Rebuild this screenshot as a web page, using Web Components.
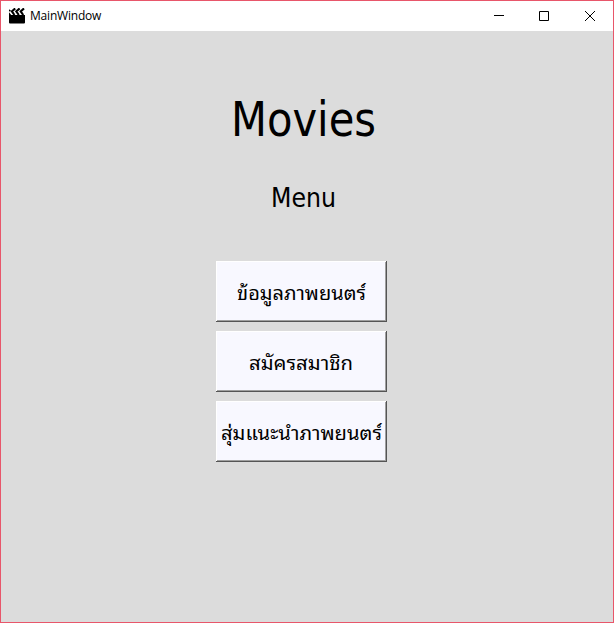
<!DOCTYPE html>
<html lang="th"><head><meta charset="utf-8"><title>MainWindow</title>
<style>html,body{margin:0;height:100%;overflow:hidden}</style></head>
<body>
<app-window caption="MainWindow">
<fit-text style="--h:57px;--mt:59px" text="Movies" size="48" span="145"></fit-text>
<fit-text style="--h:32px;--mt:34px" text="Menu" size="27" span="65"></fit-text>
<menu-list>
<menu-button text="ข้อมูลภาพยนตร์" span="129"></menu-button>
<menu-button text="สมัครสมาชิก" span="104"></menu-button>
<menu-button text="สุ่มแนะนำภาพยนตร์" span="161"></menu-button>
</menu-list>
</app-window>
<script>
class FitText extends HTMLElement{
  connectedCallback(){
    const g=n=>this.getAttribute(n);
    this.attachShadow({mode:'open'}).innerHTML=`<style>
:host{display:flex;justify-content:center;height:var(--h,30px);margin-top:var(--mt,0)}
svg{display:block;overflow:visible;height:100%;width:${g('span')}px}
text{font:${g('size')}px "DejaVu Sans Condensed","Noto Sans Thai Looped","Noto Looped Thai",Waree,Loma,Garuda,Umpush,"Noto Sans Thai","Noto Sans",sans-serif;fill:#000}
</style><svg><text x="0" y="80%" textLength="${g('span')}" lengthAdjust="spacingAndGlyphs">${g('text')}</text></svg>`;
  }
}
customElements.define('fit-text',FitText);
class MenuButton extends HTMLElement{
  connectedCallback(){
    this.attachShadow({mode:'open'}).innerHTML=`<style>
:host{display:block}
button{box-sizing:border-box;width:171px;height:61px;padding:0 1px 2px 0;display:flex;align-items:center;justify-content:center;background:#f8f8ff;border:0;box-shadow:inset -1px -1px #555,inset 1px 1px #fff,inset -2px -2px #a0a0a0}
fit-text{--h:30px}
</style><button><fit-text text="${this.getAttribute('text')}" size="19" span="${this.getAttribute('span')}"></fit-text></button>`;
  }
}
customElements.define('menu-button',MenuButton);
customElements.define('menu-list',class extends HTMLElement{
  connectedCallback(){
    this.attachShadow({mode:'open'}).innerHTML=`<style>:host{display:flex;flex-direction:column;align-items:center;gap:9px;margin-top:48px;padding-right:3px}</style><slot></slot>`;
  }
});
customElements.define('title-bar',class extends HTMLElement{
  connectedCallback(){
    this.attachShadow({mode:'open'}).innerHTML=`<style>
:host{display:flex;align-items:center;height:30px;background:#fff;padding-left:8px;box-sizing:border-box}
.name{font:12px "Open Sans","Noto Sans",sans-serif;line-height:30px;margin-left:5px;flex:1;letter-spacing:-.2px;color:#000}
.c{width:45.5px;display:flex;justify-content:center}
.c:nth-of-type(3){position:relative;left:-1px}
svg{display:block}
</style>
<svg width="16" height="16" viewBox="0 0 16 16"><path d="M0 7h16v7.5q0 1-1 1H1q-1 0-1-1zM0 1.2l2.4 1.8L0 3.4zM0 4.2l2.2 2.8H0z"/><path d="M6.2 .4L2.9 3.4 5.4 7M10.6 .4L7.3 3.4 9.8 7M15 .4L11.7 3.4 14.2 7" fill="none" stroke="#000" stroke-width="2.1"/></svg>
<span class="name"><slot></slot></span>
<span class="c"><svg width="10" height="10" shape-rendering="crispEdges"><path d="M0 4h10v1H0z"/></svg></span>
<span class="c"><svg width="10" height="10"><path d="M.5.5h9v9h-9z" fill="none" stroke="#000"/></svg></span>
<span class="c"><svg width="10" height="10"><path d="M0 0l10 10M10 0L0 10" fill="none" stroke="#000"/></svg></span>`;
  }
});
customElements.define('app-window',class extends HTMLElement{
  connectedCallback(){
    this.attachShadow({mode:'open'}).innerHTML=`<style>
:host{display:flex;flex-direction:column;box-sizing:border-box;width:614px;height:623px;border:1px solid #e8566a;background:#dcdcdc}
main{flex:1;padding-right:8px;display:flow-root}
</style><title-bar>${this.getAttribute('caption')}</title-bar><main><slot></slot></main>`;
  }
});
</script>
</body></html>
